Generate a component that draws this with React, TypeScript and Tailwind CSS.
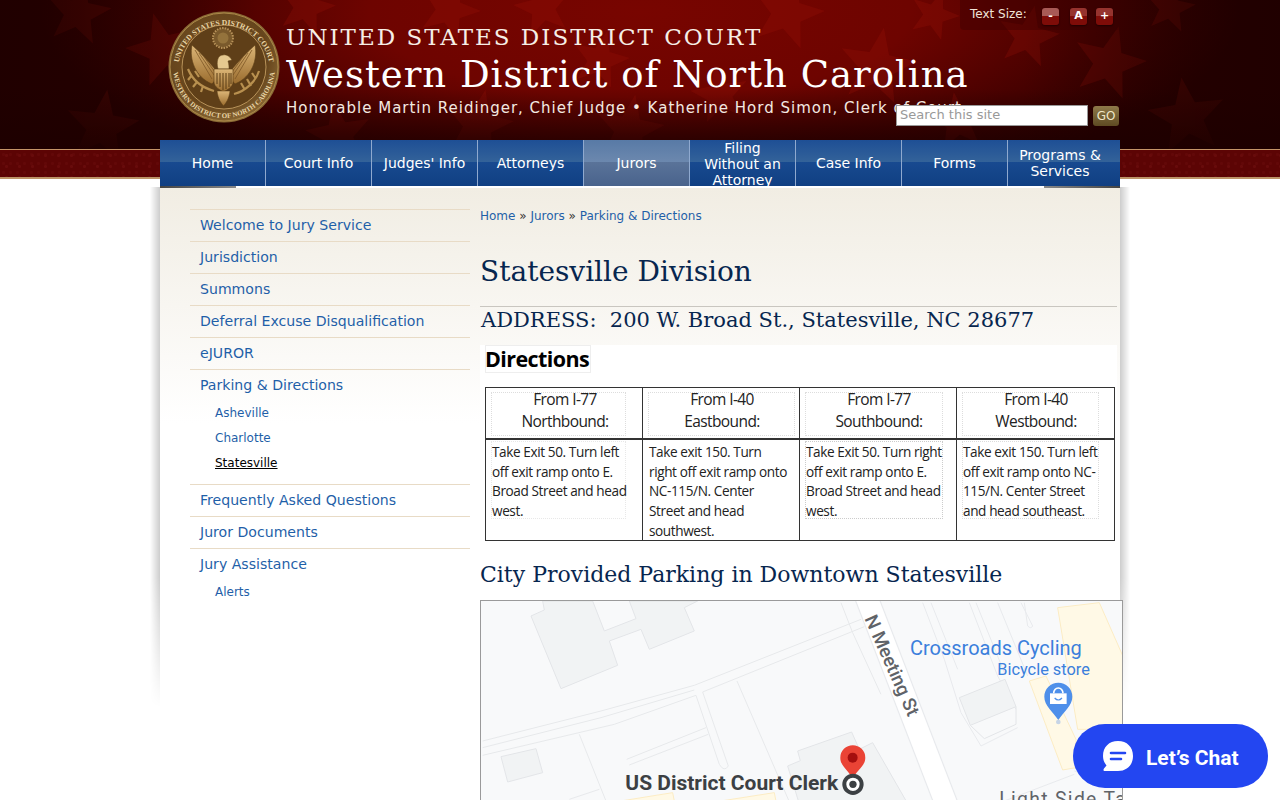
import React from "react";

const starPoints = (cx: number, cy: number, r: number, rot: number) => {
  const pts: string[] = [];
  for (let i = 0; i < 10; i++) {
    const rad = i % 2 === 0 ? r : r * 0.42;
    const a = ((rot + i * 36 - 90) * Math.PI) / 180;
    pts.push(`${(cx + rad * Math.cos(a)).toFixed(1)},${(cy + rad * Math.sin(a)).toFixed(1)}`);
  }
  return pts.join(" ");
};

const stars = [
  [78, 13, 34, 10], [163, 50, 38, -15], [102, 127, 38, 8], [306, 7, 30, 15], [339, 135, 34, -10],
  [449, 10, 32, 20], [478, 125, 36, 12], [543, 8, 30, -12], [629, 130, 36, 10], [787, 13, 38, 15],
  [877, 67, 40, 10], [934, 15, 26, 20], [958, 122, 30, -8], [1028, 37, 32, 12], [1109, 63, 38, 15],
  [1187, 117, 40, -8], [1170, 8, 26, 10], [600, 60, 30, 14], [720, 95, 30, -10],
];

const navItems = [
  "Home",
  "Court Info",
  "Judges' Info",
  "Attorneys",
  "Jurors",
  "Filing Without an Attorney",
  "Case Info",
  "Forms",
  "Programs & Services",
];

const Seal = () => (
  <svg width="112" height="112" viewBox="0 0 112 112" className="shrink-0">
    <defs>
      <radialGradient id="bronze" cx="45%" cy="40%" r="65%">
        <stop offset="0%" stopColor="#7a5526" />
        <stop offset="70%" stopColor="#66451c" />
        <stop offset="100%" stopColor="#8f6d38" />
      </radialGradient>
      <linearGradient id="gold" x1="0" y1="0" x2="0" y2="1">
        <stop offset="0%" stopColor="#dcb677" />
        <stop offset="100%" stopColor="#9a6c2e" />
      </linearGradient>
      <path id="sealTop" d="M 10 60 A 46 46 0 0 1 102 60" />
      <path id="sealBottom" d="M 5 56 A 51 51 0 0 0 107 56" />
    </defs>
    <circle cx="56" cy="56" r="55.5" fill="#8a6a35" />
    <circle cx="56" cy="56" r="54" fill="url(#bronze)" stroke="#ab8849" strokeWidth="1" />
    <circle cx="56" cy="56" r="42" fill="#5f3f18" stroke="#b8935a" strokeWidth="1" />
    <text fontFamily="'Liberation Serif',serif" fontSize="7.6" fontWeight="700" fill="#e9d5a6">
      <textPath href="#sealTop" startOffset="50%" textAnchor="middle">UNITED STATES DISTRICT COURT</textPath>
    </text>
    <text fontFamily="'Liberation Serif',serif" fontSize="7" fontWeight="700" fill="#e9d5a6">
      <textPath href="#sealBottom" startOffset="50%" textAnchor="middle">WESTERN DISTRICT OF NORTH CAROLINA</textPath>
    </text>
    <circle cx="55" cy="27" r="10" fill="#7a5a2c" stroke="#b8935a" strokeWidth="2" strokeDasharray="1.5 1.2" />
    <circle cx="55" cy="27" r="5.5" fill="#94733c" />
    <path d="M47 58 C40 50 33 42 24 34 C21 48 27 66 44 73 L50 66 Z" fill="url(#gold)" stroke="#5a3c14" strokeWidth=".6" />
    <path d="M64 58 C71 50 78 42 87 34 C90 48 84 66 67 73 L61 66 Z" fill="url(#gold)" stroke="#5a3c14" strokeWidth=".6" />
    <path d="M27 39 L44 68 M31 42 L46 64 M36 46 L47 61 M84 39 L67 68 M80 42 L65 64 M75 46 L64 61" stroke="#7d5726" strokeWidth=".8" />
    <path d="M50 58 C48 50 50 44 55 44 C59 43 62 46 64 49 L60 50 C61 53 61 56 61 58 Z" fill="#e6c98f" stroke="#5a3c14" strokeWidth=".5" />
    <path d="M46 58 H65 V71 C65 76 59 79 55.5 81 C52 79 46 76 46 71 Z" fill="url(#gold)" stroke="#5a3c14" strokeWidth=".6" />
    <path d="M49 62 V73 M52 62 V76 M55 62 V79 M58 62 V78 M61 62 V76 M63 62 V73" stroke="#5a3c14" strokeWidth="1" />
    <path d="M49 80 C50 88 53 92 55.5 95 C58 92 61 88 62 80 Z" fill="url(#gold)" stroke="#5a3c14" strokeWidth=".5" />
    <path d="M20 58 C24 68 32 76 46 80 M24 64 L20 69 M29 71 L25 76 M35 75 L33 81 M27 60 L31 66" stroke="#b8904f" strokeWidth="2.2" fill="none" />
    <path d="M91 60 C88 70 78 80 66 83 M88 68 L84 62 M83 75 L79 68 M77 79 L73 72" stroke="#b8904f" strokeWidth="2.2" fill="none" />
  </svg>
);

const MapPanel = () => (
  <div className="relative h-[230px] w-[643px] overflow-hidden border-t border-l border-r border-[#9a9a9a] bg-[#f8f9fa]">
    <svg width="642" height="230" viewBox="0 0 642 230" className="block">
      <g transform="translate(0,-5) scale(0.3333)">
        <g fill="#f1f3f4" stroke="#e3e5e8" strokeWidth="3">
          <path d="M150 60 L190 42 L185 15 L335 15 L370 105 L465 68 L445 15 L650 15 L610 35 L640 105 L505 160 L480 100 L385 135 L410 208 L240 278 Z" />
          <path d="M60 482 L165 458 L185 530 L80 558 Z" />
          <path d="M920 510 L958 494 L950 465 L1112 408 L1135 460 L1175 440 L1290 640 L960 640 Z" />
        </g>
        <g fill="none" stroke="#e7e9eb" strokeWidth="3">
          <path d="M5 435 L360 345 L640 268 L1140 70" />
          <path d="M5 478 L400 385 L645 298 M665 288 L1150 92" />
          <path d="M5 455 L360 365 L640 282" />
          <path d="M645 298 L715 505 Q730 530 742 510 L665 288" />
          <path d="M437 490 L675 395 M445 507 L682 415" />
          <path d="M768 255 L900 560 L935 640" />
          <path d="M295 415 L375 615" />
          <path d="M265 610 L355 580" />
          <path d="M1080 20 L1115 110 L1200 295" />
        </g>
        <g fill="#fff9e6" stroke="#fcecc4" strokeWidth="3">
          <path d="M420 615 L575 590 L585 640 L430 640 Z" />
          <path d="M720 615 L880 590 L890 640 L730 640 Z" />
        </g>
      </g>
      <g transform="translate(380,-5) scale(0.3333)">
        <path d="M15 0 L262 640" stroke="#e8eaed" strokeWidth="72" fill="none" />
        <path d="M15 0 L262 640" stroke="#ffffff" strokeWidth="65" fill="none" />
        <g fill="none" stroke="#e8eaed" strokeWidth="3">
          <path d="M185 20 L250 190 L300 350 L360 450 L470 395" />
          <path d="M210 20 L290 220 M325 20 L410 240 L465 340" />
          <path d="M345 20 L430 230 M410 20 L500 240" />
          <path d="M490 20 L500 90 Q510 100 515 90 L480 20" />
          <path d="M640 525 L790 570 M430 615 L640 535" />
        </g>
        <path d="M295 305 L432 250 L465 332 L328 388 Z" fill="#f1f3f4" stroke="#e3e5e8" strokeWidth="3" />
        <path d="M328 388 L370 428 L465 385 L465 332" fill="none" stroke="#e3e5e8" strokeWidth="3" />
        <path d="M590 35 L715 20 L790 190 L790 400 L650 400 Z" fill="#fff9e6" stroke="#fcecc4" strokeWidth="3" />
        <path d="M505 255 L555 240 L645 430 L645 515 L605 522 Z" fill="#fff9e6" stroke="#fcecc4" strokeWidth="3" />
        <text x="76" y="216" textAnchor="middle" transform="rotate(66 76 216)" fontFamily="Roboto,sans-serif" fontWeight="500" fontSize="56" fill="#5f6368" stroke="#fff" strokeWidth="6" paintOrder="stroke">N Meeting St</text>
        <text x="147" y="176" fontFamily="Roboto,sans-serif" fontSize="60" fill="#3b7fdc">Crossroads Cycling</text>
        <text x="409" y="236" fontFamily="Roboto,sans-serif" fontSize="49" fill="#3b7fdc">Bicycle store</text>
        <path d="M592 372 C575 345 550 330 550 302 A42 42 0 0 1 634 302 C634 330 609 345 592 372 Z" fill="#4e8fea" />
        <circle cx="592" cy="378" r="7" fill="#c6d4e6" />
        <path d="M567 292 H617 V324 H567 Z" fill="#fff" />
        <path d="M578 292 A14 16 0 0 1 606 292" fill="none" stroke="#fff" strokeWidth="5" />
        <path d="M581 306 Q592 318 603 306" fill="none" stroke="#4e8fea" strokeWidth="3.5" />
        <text x="415" y="630" fontFamily="Roboto,sans-serif" fontSize="58" fill="#5f6368" letterSpacing="4">Light Side Tavern</text>
      </g>
      <g transform="translate(0,-5) scale(0.3333)">
        <path d="M1115 552 C1105 522 1078 512 1078 485 A37.5 37.5 0 0 1 1153 485 C1153 512 1125 522 1115 552 Z" fill="#ea4335" />
        <circle cx="1115" cy="485" r="15" fill="#a50e0e" />
        <circle cx="1116" cy="565" r="26" fill="#fff" stroke="#3c4043" strokeWidth="12" />
        <circle cx="1116" cy="565" r="11" fill="#3c4043" />
        <text x="433" y="582" fontFamily="Roboto,sans-serif" fontWeight="700" fontSize="63" fill="#3c4043">US District Court Clerk</text>
      </g>
    </svg>
  </div>
);

const cellText = "font-['Open_Sans','Noto_Sans',sans-serif] text-[13.6px] leading-[19.7px] tracking-[-0.4px] text-[#222]";

const directions = [
  { box: "w-[135px]", bodyBox: "border-[#e8e8e8]", head: ["From I-77", "Northbound:"], lines: ["Take Exit 50. Turn left", "off exit ramp onto E.", "Broad Street and head", "west."] },
  { box: "w-[147px]", bodyBox: "border-transparent", head: ["From I-40", "Eastbound:"], lines: ["Take exit 150. Turn", "right off exit ramp onto", "NC-115/N. Center", "Street and head", "southwest."] },
  { box: "w-[138px]", bodyBox: "border-[#cccccc]", head: ["From I-77", "Southbound:"], lines: ["Take Exit 50. Turn right", "off exit ramp onto E.", "Broad Street and head", "west."] },
  { box: "w-[137px]", bodyBox: "border-[#dddddd]", head: ["From I-40", "Westbound:"], lines: ["Take exit 150. Turn left", "off exit ramp onto NC-", "115/N. Center Street", "and head southeast."] },
];

const DirectionsImage = () => (
  <div className="mt-[12px] h-[200px] w-[637px] bg-white pl-[5px]">
    <div>
      <span className="inline-block border border-[#eeeeee] pr-[1px] font-['Open_Sans',sans-serif] text-[21.5px] font-bold leading-[26px] tracking-[-0.6px] text-black">
        <span className="-ml-[1px] block">Directions</span>
      </span>
    </div>
    <div className="mt-[13px] grid h-[154px] w-[630px] grid-cols-4 border border-[#333]">
      {directions.map((d, i) => (
        <div key={i} className={i < 3 ? "flex flex-col border-r border-[#333]" : "flex flex-col"}>
          <div className="h-[52px] border-b-2 border-[#333] px-[5px] pt-[4px]">
            <div className={`h-[44px] border border-dotted border-[#ddd] ${d.box}`}>
              <div className="-mt-[5px] w-[146px] text-center">
                {d.head.map((h) => (
                  <div key={h} className="font-['Open_Sans',sans-serif] text-[15.5px] leading-[22px] tracking-[-0.6px] text-[#222]">
                    {h}
                  </div>
                ))}
              </div>
            </div>
          </div>
          <div className="px-[5px] pt-[1px]">
            <div className={`h-[78px] border border-dotted ${d.box} ${d.bodyBox}`}>
              {d.lines.map((l) => (
                <div key={l} className={`${cellText} whitespace-nowrap`}>
                  {l}
                </div>
              ))}
            </div>
          </div>
        </div>
      ))}
    </div>
  </div>
);

const sideTop = ["Welcome to Jury Service", "Jurisdiction", "Summons", "Deferral Excuse Disqualification", "eJUROR"];
const sideBottom = ["Frequently Asked Questions", "Juror Documents"];
const link = "text-[#1f5fa8]";

const SideItem = ({ label, children }: { label: string; children?: React.ReactNode }) => (
  <li className="border-t border-[#e8dbc6]">
    <a className={`block h-[31px] pl-[10px] text-[14.1px] leading-[30px] ${link}`}>{label}</a>
    {children}
  </li>
);

const SubItem = ({ label, active }: { label: string; active?: boolean }) => (
  <a className={`block h-[25px] pl-[25px] text-[12px] leading-[25px] ${active ? "text-black underline" : link}`}>{label}</a>
);

const SizeButton = ({ label, top, gap }: { label: string; top: string; gap: string }) => (
  <span className={`mt-[1px] flex h-[17px] w-[17px] items-center justify-center rounded-[3px] text-[11px] font-bold text-white shadow-[0_1px_2px_rgba(0,0,0,0.5)] ${top} ${gap}`}>
    {label}
  </span>
);

const App = () => {
  return (
    <div className="relative h-[800px] overflow-hidden bg-white font-['DejaVu_Sans',sans-serif]">
      <header className="relative h-[149px] overflow-hidden bg-[radial-gradient(ellipse_600px_190px_at_50%_8%,#780500_0%,#6e0400_45%,#460100_76%,#270000_100%)]">
        <svg className="absolute inset-0" width="1280" height="149" viewBox="0 0 1280 149">
          {stars.map(([x, y, r, rot], i) => (
            <polygon key={i} points={starPoints(x, y, r, rot)} fill="#a3140a" opacity="0.24" />
          ))}
        </svg>
        <div className="absolute inset-0 bg-[linear-gradient(to_right,rgba(30,0,0,0.75),transparent_20%,transparent_80%,rgba(30,0,0,0.75))]" />
        <div className="absolute inset-x-0 bottom-0 h-[60px] bg-gradient-to-b from-transparent to-[#1d0000]/80" />
        <div className="relative mx-auto flex w-[960px] items-start pl-[8px] pt-[11px]">
          <Seal />
          <div className="ml-[6px] pt-[11px] font-['DejaVu_Serif',serif] text-white">
            <div className="text-[23px] leading-[30px] tracking-[2px] text-[#f6eee6]">UNITED STATES DISTRICT COURT</div>
            <div className="mt-[1px] text-[37px] leading-[44px] tracking-[1px]">Western District of North Carolina</div>
            <div className="whitespace-nowrap font-['DejaVu_Sans',sans-serif] text-[15px] leading-[22px] tracking-[1px] text-[#f3e9e0]">
              Honorable Martin Reidinger, Chief Judge • Katherine Hord Simon, Clerk of Court
            </div>
          </div>
        </div>
        <div className="absolute left-[960px] top-0 flex h-[30px] w-[160px] items-start rounded-bl-[4px] bg-[#3a0000]/40 pl-[10px] pt-[7px]">
          <span className="w-[57px] whitespace-nowrap text-[12px] leading-[14px] text-[#f0e4d8]">Text Size:</span>
          <SizeButton label="-" gap="ml-[15px]" top="bg-[linear-gradient(#a85a56_50%,#7e0c08_50%)]" />
          <SizeButton label="A" gap="ml-[11px]" top="bg-[linear-gradient(#96332e_50%,#7e0c08_50%)]" />
          <SizeButton label="+" gap="ml-[9px]" top="bg-[linear-gradient(#96332e_50%,#7e0c08_50%)]" />
        </div>
        <div className="absolute left-[896px] top-[105px] flex items-center">
          <div className="h-[21px] w-[192px] border border-[#999] bg-white pl-[3px] text-[13px] leading-[18px] text-[#999]">Search this site</div>
          <div className="ml-[5px] h-[20px] w-[26px] rounded-[3px] bg-gradient-to-b from-[#8f7a4a] to-[#5e4a22] text-center text-[12px] leading-[20px] text-[#efe6c8]">GO</div>
        </div>
      </header>

      <div className="h-[30px] border-t border-b-2 border-t-[#c49468] border-b-[#bd9468] bg-[#5c0404] bg-[radial-gradient(circle,#680b0b_1px,transparent_2px),radial-gradient(circle,#630808_1px,transparent_2px)] bg-[length:13px_11px,7px_9px]" />

      <div className="relative mx-auto -mt-[39px] w-[960px]">
        <div className="absolute -left-[10px] top-[47px] h-[520px] w-[10px] bg-gradient-to-l from-black/20 to-transparent [mask-image:linear-gradient(to_bottom,black_75%,transparent)]" />
        <div className="absolute -right-[10px] top-[47px] h-[520px] w-[10px] bg-gradient-to-r from-black/20 to-transparent [mask-image:linear-gradient(to_bottom,black_75%,transparent)]" />

        <nav className="relative grid h-[46px] grid-cols-[repeat(8,106px)_1fr]">
          {navItems.map((item, i) => (
            <a
              key={item}
              className={`flex h-[46px] items-center justify-center text-center text-[14px] leading-[16px] text-white ${
                i < 8 ? "border-r border-[#8fa9cf] px-[10px]" : "pl-[10px] pr-[18px]"
              } ${item === "Filing Without an Attorney" ? "pt-[2px]" : ""} ${
                item === "Jurors"
                  ? "bg-[linear-gradient(to_bottom,#587aa6_0%,#6c88ae_48%,#5a7399_48%,#49638c_100%)]"
                  : "bg-[linear-gradient(to_bottom,#1e4f95_0%,#336299_47%,#184a90_47%,#103f82_100%)]"
              }`}
            >
              {item}
            </a>
          ))}
        </nav>
        <div className="flex h-[2px] justify-between bg-white">
          <div className="w-[76px] bg-gradient-to-r from-[#444] to-[#888]" />
          <div className="w-[76px] bg-gradient-to-l from-[#444] to-[#888]" />
        </div>

        <div className="flex bg-[linear-gradient(to_bottom,#f1ede3_0,#ffffff_235px)] pl-[30px]">
          <aside className="w-[280px] shrink-0 pt-[21px]">
            <ul>
              {sideTop.map((s) => (
                <SideItem key={s} label={s} />
              ))}
              <SideItem label="Parking & Directions">
                <div className="pb-[8px]">
                  <SubItem label="Asheville" />
                  <SubItem label="Charlotte" />
                  <SubItem label="Statesville" active />
                </div>
              </SideItem>
              {sideBottom.map((s) => (
                <SideItem key={s} label={s} />
              ))}
              <SideItem label="Jury Assistance">
                <SubItem label="Alerts" />
              </SideItem>
            </ul>
          </aside>

          <main className="ml-[10px] w-[640px] pt-[20px]">
            <div className="text-[12px] leading-[16px] text-[#333]">
              <a className={link}>Home</a> » <a className={link}>Jurors</a> » <a className={link}>Parking &amp; Directions</a>
            </div>
            <h1 className="mt-[27px] h-[56px] w-[637px] border-b border-[#c9c6c0] font-['DejaVu_Serif',serif] text-[28px] leading-[42px] text-[#07264f]">
              Statesville Division
            </h1>
            <h2 className="ml-[1px] mt-[1px] whitespace-pre font-['DejaVu_Serif',serif] text-[21px] leading-[25px] text-[#07264f]">
              {"ADDRESS:  200 W. Broad St., Statesville, NC 28677"}
            </h2>
            <DirectionsImage />
            <h3 className="mt-[17px] font-['DejaVu_Serif',serif] text-[22px] leading-[26px] text-[#07264f]">
              City Provided Parking in Downtown Statesville
            </h3>
            <div className="mt-[12px]">
              <MapPanel />
            </div>
          </main>
        </div>
      </div>

      <div className="absolute left-[1073px] top-[724px] flex h-[64px] w-[195px] items-center rounded-[32px] bg-[#2346f1] pl-[29px]">
        <svg width="32" height="32" viewBox="0 0 32 32">
          <path d="M16 1 C25 1 31 7 31 16 C31 25 25 31 16 31 L3 31 C1.5 31 1 30 2 28.5 L4.5 25.5 C2.5 23 1 20 1 16 C1 7 7 1 16 1 Z" fill="#fff" />
          <path d="M9 13 H23 M9 19 H19" stroke="#2346f1" strokeWidth="2.6" strokeLinecap="round" />
        </svg>
        <span className="ml-[12px] mt-[5px] font-['Roboto',sans-serif] text-[21px] font-bold text-white">Let’s Chat</span>
      </div>
    </div>
  );
};

export default App;
